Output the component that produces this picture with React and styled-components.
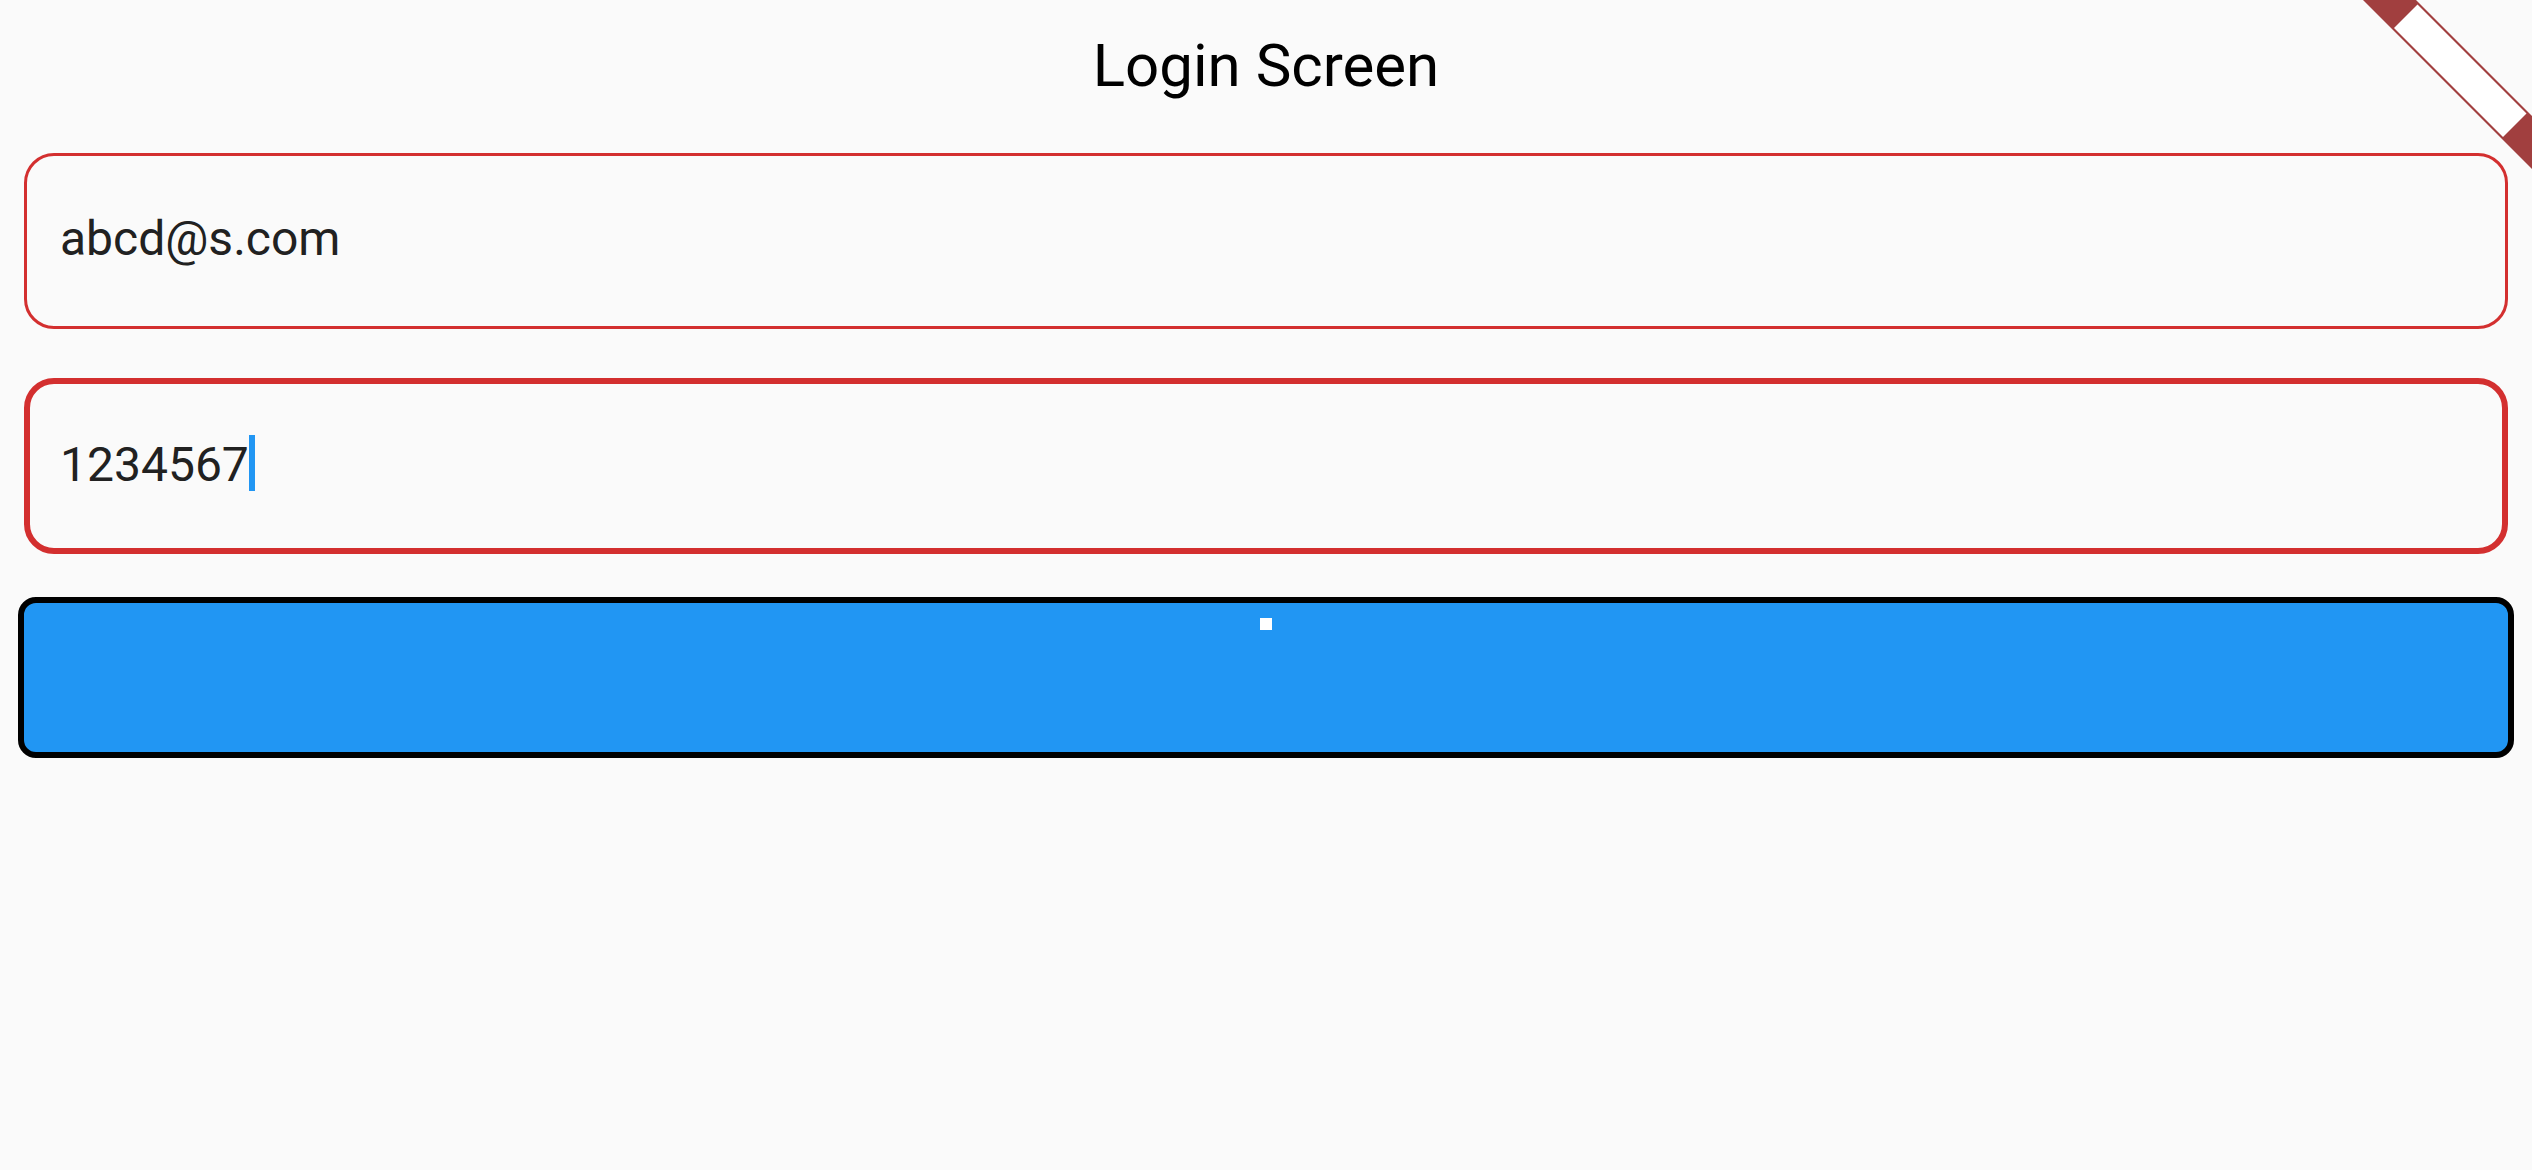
import React from 'react';
import styled, { createGlobalStyle } from 'styled-components';

const GlobalStyle = createGlobalStyle`
  html, body {
    margin: 0;
    padding: 0;
    background: #fafafa;
    overflow: hidden;
  }
  body {
    font-family: Roboto, "Noto Sans", "Liberation Sans", sans-serif;
  }
`;

const Screen = styled.div`
  position: relative;
  width: 2532px;
  height: 1170px;
  background: #fafafa;
  box-sizing: border-box;
  padding: 0 24px;
  display: flex;
  flex-direction: column;
`;

const Header = styled.header`
  height: 153px;
  box-sizing: border-box;
  padding-top: 36px;
  display: flex;
  justify-content: center;
`;

const Title = styled.h1`
  margin: 0;
  font-size: 60px;
  line-height: 60px;
  font-weight: 400;
  color: #000;
`;

const Form = styled.div`
  display: flex;
  flex-direction: column;
`;

const Field = styled.div`
  height: 176px;
  box-sizing: border-box;
  border: ${(p) => (p.$focused ? 6 : 3)}px solid #d32f2f;
  border-radius: 30px;
  padding: 0 0 4px ${(p) => (p.$focused ? 30 : 33)}px;
  display: flex;
  align-items: center;
  margin-top: ${(p) => p.$gap || 0}px;
`;

const Value = styled.span`
  font-size: 48px;
  line-height: 56px;
  color: #212121;
  white-space: pre;
`;

const Caret = styled.span`
  display: inline-block;
  width: 6px;
  height: 56px;
  background: #2196f3;
  vertical-align: -10px;
`;

const SubmitButton = styled.button`
  margin: 43px -6px 0;
  height: 161px;
  box-sizing: border-box;
  border: 6px solid #000;
  border-radius: 18px;
  background: #2196f3;
  padding: 15px 0 0;
  display: flex;
  justify-content: center;
  align-items: flex-start;
  cursor: pointer;
`;

const Dot = styled.span`
  width: 12px;
  height: 12px;
  background: #fff;
`;

const Banner = styled.svg`
  position: absolute;
  top: 0;
  right: 0;
`;

function DebugBanner() {
  return (
    <Banner width="170" height="170" viewBox="0 0 170 170">
      <polygon points="1,0 54,0 170,116 170,169" fill="#a13f3f" />
      <polygon points="32,28 55.5,4.5 164.5,113.5 141,137" fill="#ffffff" />
    </Banner>
  );
}

export default function App() {
  return (
    <>
      <GlobalStyle />
      <Screen>
        <Header>
          <Title>Login Screen</Title>
        </Header>
        <Form>
          <Field>
            <Value>abcd@s.com</Value>
          </Field>
          <Field $focused $gap={49}>
            <Value>
              1234567
              <Caret />
            </Value>
          </Field>
          <SubmitButton type="button">
            <Dot />
          </SubmitButton>
        </Form>
        <DebugBanner />
      </Screen>
    </>
  );
}
